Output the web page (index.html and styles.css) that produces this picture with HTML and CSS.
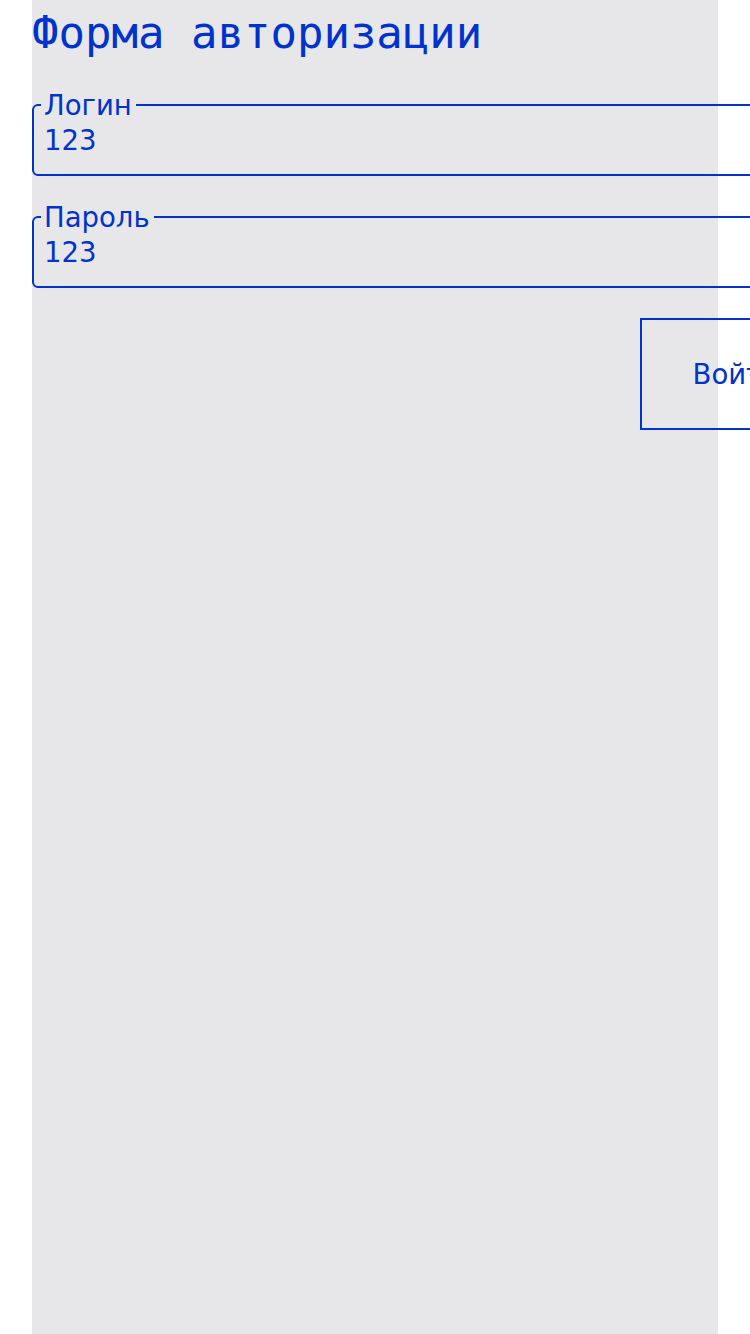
FILE: index.html
```html
<!DOCTYPE html>
<html lang="ru">
<head>
<meta charset="utf-8">
<title>Форма авторизации</title>
<link rel="stylesheet" href="styles.css">
</head>
<body>
<main class="panel">
  <h1 class="title">Форма авторизации</h1>
  <form class="form">
    <fieldset class="field">
      <legend class="field-label">Логин</legend>
      <input class="field-input" type="text" value="123">
    </fieldset>
    <fieldset class="field">
      <legend class="field-label">Пароль</legend>
      <input class="field-input" type="text" value="123">
    </fieldset>
    <div class="actions">
      <button class="submit" type="button">Войти</button>
    </div>
  </form>
</main>
</body>
</html>
```

FILE: styles.css
```css
html, body {
  margin: 0;
  padding: 0;
  background: #ffffff;
  overflow: hidden;
}

.panel {
  width: 686px;
  min-height: 1334px;
  margin-left: 32px;
  background: #e7e7ea;
  color: #0033cc;
  font-family: "DejaVu Sans", sans-serif;
}

.title {
  margin: 0;
  padding-top: 8px;
  font-family: "DejaVu Sans Mono", monospace;
  font-size: 44px;
  font-weight: normal;
  line-height: 49px;
  white-space: pre;
}

.form {
  width: 801px;
  padding-top: 33px;
}

.field {
  margin: 0 0 26px 0;
  padding: 5px 9px 19px 10px;
  border: 2px solid #0033cc;
  border-radius: 6px;
}

.field-label {
  margin-left: -3px;
  padding: 0 4px 0 3px;
  font-size: 27.5px;
  line-height: 30px;
}

.field-input {
  display: block;
  width: 100%;
  box-sizing: border-box;
  margin: 0;
  padding: 0;
  border: 0;
  outline: none;
  background: transparent;
  color: #0033cc;
  font-family: "DejaVu Sans", sans-serif;
  font-size: 27.5px;
  line-height: 30px;
  height: 30px;
}

.actions {
  display: flex;
  justify-content: flex-end;
  padding-top: 4px;
}

.submit {
  height: 112px;
  padding: 0 51px;
  border: 2px solid #0033cc;
  border-radius: 0;
  background: transparent;
  color: #0033cc;
  font-family: "DejaVu Sans", sans-serif;
  font-size: 27.5px;
}
```
